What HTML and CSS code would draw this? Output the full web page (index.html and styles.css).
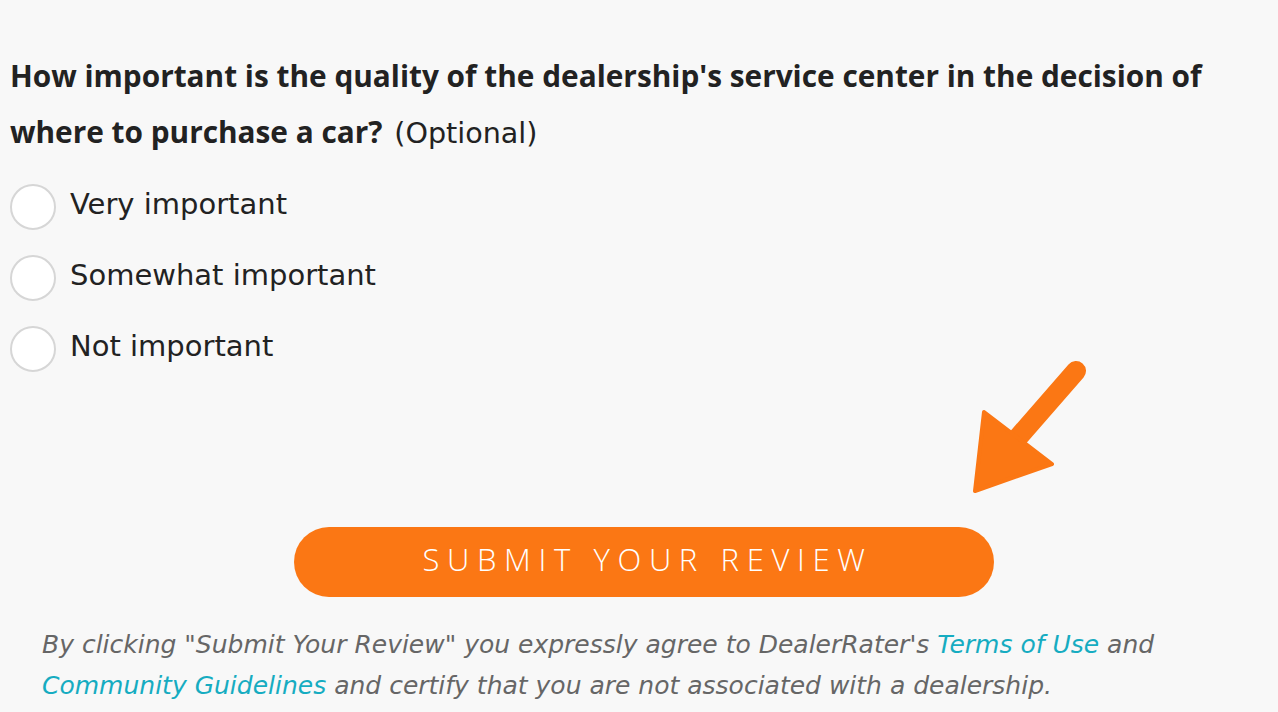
FILE: index.html
```html
<!DOCTYPE html>
<html>
<head>
<meta charset="utf-8">
<link rel="stylesheet" href="styles.css">
</head>
<body>
<div class="page">
  <h2 class="question">How important is the quality of the dealership's service center in the decision of where to purchase a car? <span class="opt">(Optional)</span></h2>
  <div class="options">
    <label class="option"><span class="radio"></span><span class="label">Very important</span></label>
    <label class="option"><span class="radio"></span><span class="label">Somewhat important</span></label>
    <label class="option"><span class="radio"></span><span class="label">Not important</span></label>
  </div>
  <div class="submit-row">
    <button class="submit">SUBMIT YOUR REVIEW</button>
  </div>
  <p class="legal">By clicking "Submit Your Review" you expressly agree to DealerRater's <a class="link">Terms of Use</a> and <a class="link">Community Guidelines</a> and certify that you are not associated with a dealership.</p>
  <svg class="arrow" width="140" height="150" viewBox="960 350 140 150">
    <line x1="1076" y1="371" x2="1015" y2="441" stroke="#fb7714" stroke-width="20" stroke-linecap="round"/>
    <polygon points="984,412 1052,464 975,491" fill="#fb7714" stroke="#fb7714" stroke-width="4" stroke-linejoin="round"/>
  </svg>
</div>
</body>
</html>
```
FILE: styles.css
```css
html, body {
  margin: 0;
  padding: 0;
  background: #f8f8f8;
}
.page {
  position: relative;
  width: 1268px;
  height: 664px;
  padding-left: 10px;
  padding-top: 48px;
  font-family: "DejaVu Sans", sans-serif;
  color: #222;
  overflow: hidden;
}
.question {
  margin: 0;
  width: 1220px;
  font-family: "Open Sans", sans-serif;
  font-size: 29.8px;
  font-weight: 700;
  line-height: 56px;
  color: #222;
}
.opt {
  font-family: "DejaVu Sans", sans-serif;
  font-size: 28.6px;
  font-weight: 400;
  line-height: 1;
  margin-left: 4px;
}
.options {
  display: flex;
  flex-direction: column;
  margin-top: 11px;
}
.option {
  display: flex;
  align-items: center;
  height: 71px;
  gap: 14px;
}
.radio {
  width: 42px;
  height: 42px;
  border: 2px solid #d6d6d6;
  border-radius: 50%;
  background: #fff;
  flex: none;
}
.label {
  font-size: 29px;
  color: #222;
  padding-bottom: 6px;
}
.submit-row {
  display: flex;
  justify-content: center;
  margin-top: 143px;
}
.submit {
  width: 700px;
  height: 70px;
  border: none;
  border-radius: 35px;
  background: #fb7714;
  color: #fff;
  font-family: "Open Sans", sans-serif;
  font-weight: 300;
  font-size: 31px;
  letter-spacing: 7.65px;
  padding: 0 0 6px 7px;
}
.legal {
  margin: 27px 0 0 32px;
  width: 1130px;
  font-size: 25px;
  line-height: 41px;
  font-style: italic;
  color: #666;
}
.link {
  color: #16acc1;
}
.arrow {
  position: absolute;
  left: 960px;
  top: 350px;
}
```
